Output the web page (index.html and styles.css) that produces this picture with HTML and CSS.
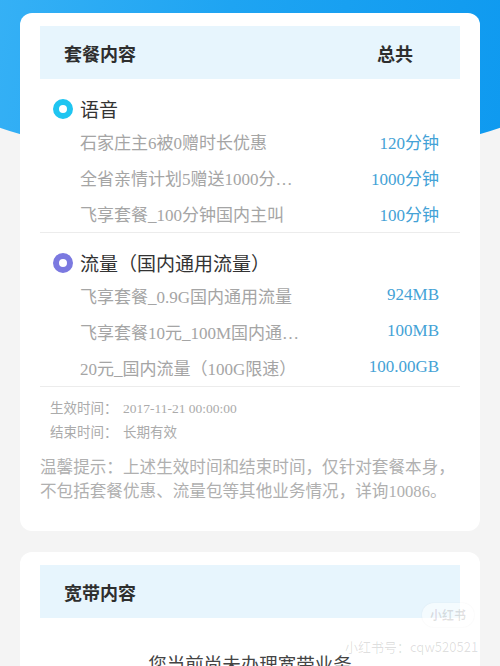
FILE: index.html
```html
<!DOCTYPE html>
<html lang="zh-CN">
<head>
<meta charset="utf-8">
<title>套餐内容</title>
<link rel="stylesheet" href="styles.css">
</head>
<body>
<div class="page">
  <div class="card">
    <div class="band">
      <span>套餐内容</span>
      <span>总共</span>
    </div>

    <div class="section">
      <div class="sec-title"><span class="dot dot-cyan"></span><span>语音</span></div>
      <div class="row"><span class="name">石家庄主6被0赠时长优惠</span><span class="val">120分钟</span></div>
      <div class="row"><span class="name">全省亲情计划5赠送1000分…</span><span class="val">1000分钟</span></div>
      <div class="row"><span class="name">飞享套餐_100分钟国内主叫</span><span class="val">100分钟</span></div>
    </div>

    <div class="section">
      <div class="sec-title"><span class="dot dot-purple"></span><span>流量（国内通用流量）</span></div>
      <div class="row"><span class="name">飞享套餐_0.9G国内通用流量</span><span class="val">924MB</span></div>
      <div class="row"><span class="name">飞享套餐10元_100M国内通…</span><span class="val">100MB</span></div>
      <div class="row"><span class="name">20元_国内流量（100G限速）</span><span class="val">100.00GB</span></div>
    </div>

    <div class="dates">
      <div class="date-row"><span class="label">生效时间：</span><span>2017-11-21 00:00:00</span></div>
      <div class="date-row"><span class="label">结束时间：</span><span>长期有效</span></div>
    </div>

    <p class="tips">温馨提示：上述生效时间和结束时间，仅针对套餐本身，<br>不包括套餐优惠、流量包等其他业务情况，详询10086。</p>
  </div>

  <div class="card card-2">
    <div class="band">
      <span>宽带内容</span>
    </div>
    <p class="empty">您当前尚未办理宽带业务</p>
  </div>

  <div class="wm-logo">小红书</div>
  <div class="wm-id">小红书号：cqw520521</div>
</div>
</body>
</html>
```

FILE: styles.css
```css
html, body {
  margin: 0;
  padding: 0;
}

html {
  overflow: hidden;
}

body {
  width: 500px;
  height: 666px;
  overflow: hidden;
  background: #f4f4f4;
  font-family: "Liberation Serif", "Noto Sans CJK SC", serif;
}

.page {
  position: relative;
  height: 666px;
  overflow: hidden;
  box-sizing: border-box;
  padding: 13px 20px 0;
}

.page::before {
  content: "";
  position: absolute;
  left: -50px;
  top: 0;
  width: 600px;
  height: 159px;
  border-radius: 0 0 300px 300px / 0 0 70px 70px;
  background: linear-gradient(100deg, #3ab3f6 0%, #1ea4f2 45%, #0c98ef 100%);
  z-index: 0;
}

.card {
  position: relative;
  z-index: 1;
  background: #ffffff;
  border-radius: 12px;
  padding: 13px 20px 27px;
}

.card-2 {
  margin-top: 21px;
  padding-bottom: 30px;
}

.band {
  display: flex;
  justify-content: space-between;
  align-items: center;
  height: 53px;
  padding: 0 47px 0 24px;
  background: #e7f5fd;
  font-family: "Noto Sans CJK SC", sans-serif;
  font-weight: 700;
  font-size: 18px;
  color: #2e2e2e;
}

.section {
  padding: 15px 0 1px;
  border-bottom: 1px solid #ececec;
}

.sec-title {
  display: flex;
  align-items: center;
  height: 29px;
  font-family: "Noto Sans CJK SC", sans-serif;
  font-size: 19px;
  color: #333333;
}

.dot {
  box-sizing: border-box;
  width: 20px;
  height: 20px;
  border-radius: 50%;
  margin: 0 7px 0 13px;
  background: #ffffff;
  border: 6.5px solid;
}

.dot-cyan {
  border-color: #1fc5f1;
}

.dot-purple {
  border-color: #7b79e0;
}

.row {
  display: flex;
  justify-content: space-between;
  align-items: center;
  height: 36px;
  padding: 0 21px 0 40px;
  font-size: 17px;
}

.name {
  color: #a5a5a5;
}

.val {
  color: #44a2d6;
}

.dates {
  padding: 10px 0 0 10px;
  font-size: 13.5px;
  color: #ababab;
}

.date-row {
  line-height: 24px;
}

.label {
  display: inline-block;
  width: 73px;
}

.tips {
  margin: 11px 0 0;
  font-size: 16.6px;
  line-height: 24px;
  color: #b0b0b0;
}

.empty {
  margin: 30px 0 0;
  text-align: center;
  font-family: "Noto Sans CJK SC", sans-serif;
  font-size: 18.5px;
  line-height: 30px;
  color: #444444;
}

.wm-logo {
  position: absolute;
  z-index: 2;
  left: 422px;
  top: 603px;
  width: 52px;
  height: 24px;
  border-radius: 12px;
  background: rgba(255, 255, 255, 0.55);
  box-shadow: 0 0 2px rgba(0, 0, 0, 0.06);
  text-align: center;
  line-height: 24px;
  font-family: "Noto Sans CJK SC", sans-serif;
  font-size: 12px;
  font-weight: 700;
  color: rgba(0, 0, 0, 0.12);
}

.wm-id {
  position: absolute;
  z-index: 2;
  left: 345px;
  top: 638px;
  width: 155px;
  overflow: hidden;
  white-space: nowrap;
  font-family: "Noto Sans CJK SC", sans-serif;
  font-size: 13px;
  line-height: 18px;
  color: rgba(0, 0, 0, 0.13);
}
```
